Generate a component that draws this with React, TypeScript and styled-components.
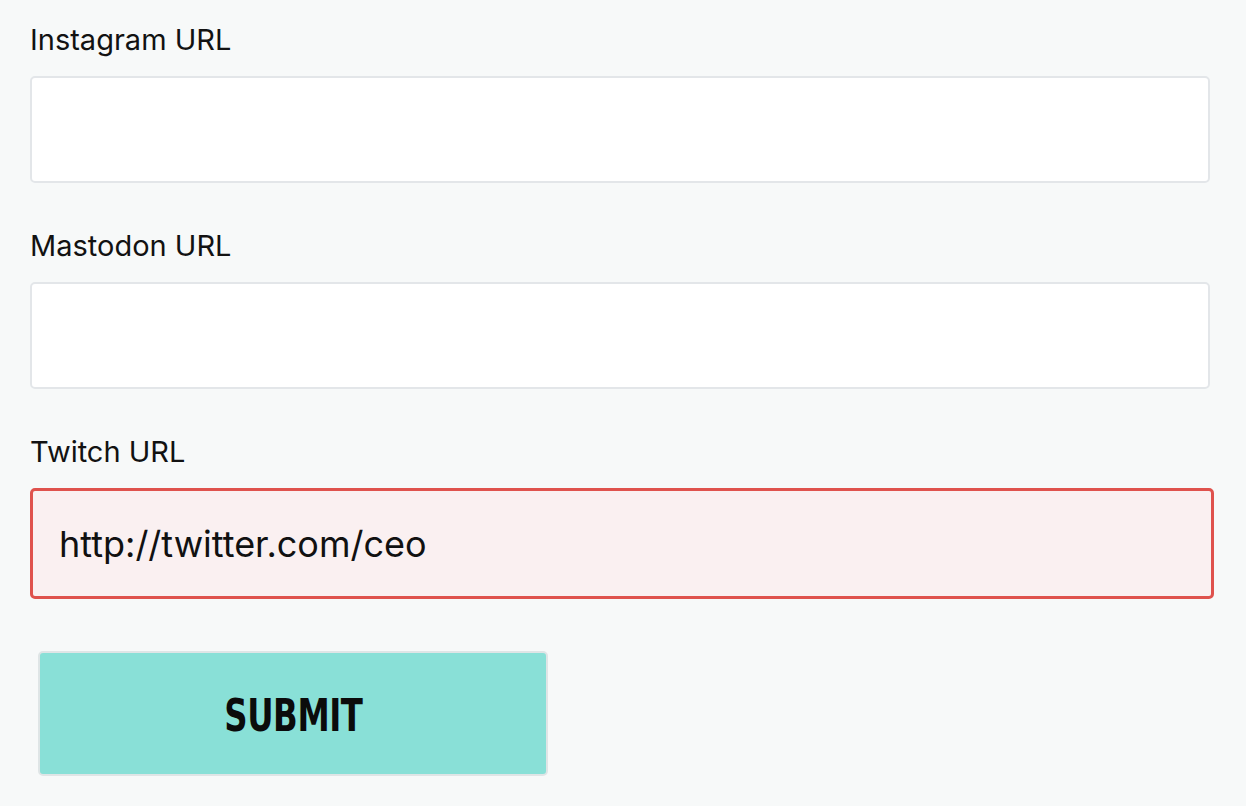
import React, { useState } from "react";
import styled, { createGlobalStyle } from "styled-components";

const GlobalStyle = createGlobalStyle`
  html, body {
    margin: 0;
    padding: 0;
    background: #f7f9f9;
  }
  body {
    font-family: Inter, "Noto Sans", "Liberation Sans", sans-serif;
    color: #111;
  }
`;

const Form = styled.form`
  display: flex;
  flex-direction: column;
  padding: 22px 0 0 30px;
  width: 1184px;
`;

const Field = styled.div`
  display: flex;
  flex-direction: column;
  margin-bottom: 45px;
`;

const Label = styled.label`
  font-size: 29px;
  line-height: 36px;
  font-weight: 400;
  margin-bottom: 18px;
  color: #121212;
`;

const Input = styled.input<{ invalid?: boolean }>`
  box-sizing: border-box;
  width: ${(p) => (p.invalid ? "1184px" : "1180px")};
  height: ${(p) => (p.invalid ? "111px" : "107px")};
  border: ${(p) => (p.invalid ? "3px solid #df524d" : "2px solid #e3e6e9")};
  border-radius: 5px;
  background: ${(p) => (p.invalid ? "#faf0f1" : "#ffffff")};
  padding: 0 26px;
  font-family: Inter, "Noto Sans", "Liberation Sans", sans-serif;
  font-size: 36px;
  color: #111;
  outline: none;
`;

const ButtonRow = styled.div`
  display: flex;
  margin-top: 7px;
`;

const SubmitButton = styled.button`
  box-sizing: border-box;
  margin-left: 8px;
  width: 510px;
  height: 125px;
  padding: 0;
  background: #89e0d7;
  border: 2px solid #dfe5e6;
  border-radius: 5px;
  font-family: "Liberation Sans Narrow", "DejaVu Sans Condensed", "Liberation Sans", sans-serif;
  font-stretch: condensed;
  font-weight: 700;
  font-size: 45px;
  color: #0b0b0b;
  cursor: pointer;
`;

const ButtonText = styled.span`
  display: inline-block;
  transform: scaleX(0.8);
  letter-spacing: -0.5px;
  margin-top: 4px;
`;

interface FieldDef {
  id: string;
  label: string;
  initial: string;
  invalid?: boolean;
}

const fields: FieldDef[] = [
  { id: "instagram", label: "Instagram URL", initial: "" },
  { id: "mastodon", label: "Mastodon URL", initial: "" },
  { id: "twitch", label: "Twitch URL", initial: "http://twitter.com/ceo", invalid: true },
];

export default function App() {
  const [values, setValues] = useState<Record<string, string>>(() =>
    Object.fromEntries(fields.map((f) => [f.id, f.initial]))
  );

  return (
    <>
      <GlobalStyle />
      <Form onSubmit={(e) => e.preventDefault()}>
        {fields.map((f) => (
          <Field key={f.id}>
            <Label htmlFor={f.id}>{f.label}</Label>
            <Input
              id={f.id}
              invalid={f.invalid}
              value={values[f.id]}
              onChange={(e) => setValues({ ...values, [f.id]: e.target.value })}
            />
          </Field>
        ))}
        <ButtonRow>
          <SubmitButton type="submit">
            <ButtonText>SUBMIT</ButtonText>
          </SubmitButton>
        </ButtonRow>
      </Form>
    </>
  );
}
